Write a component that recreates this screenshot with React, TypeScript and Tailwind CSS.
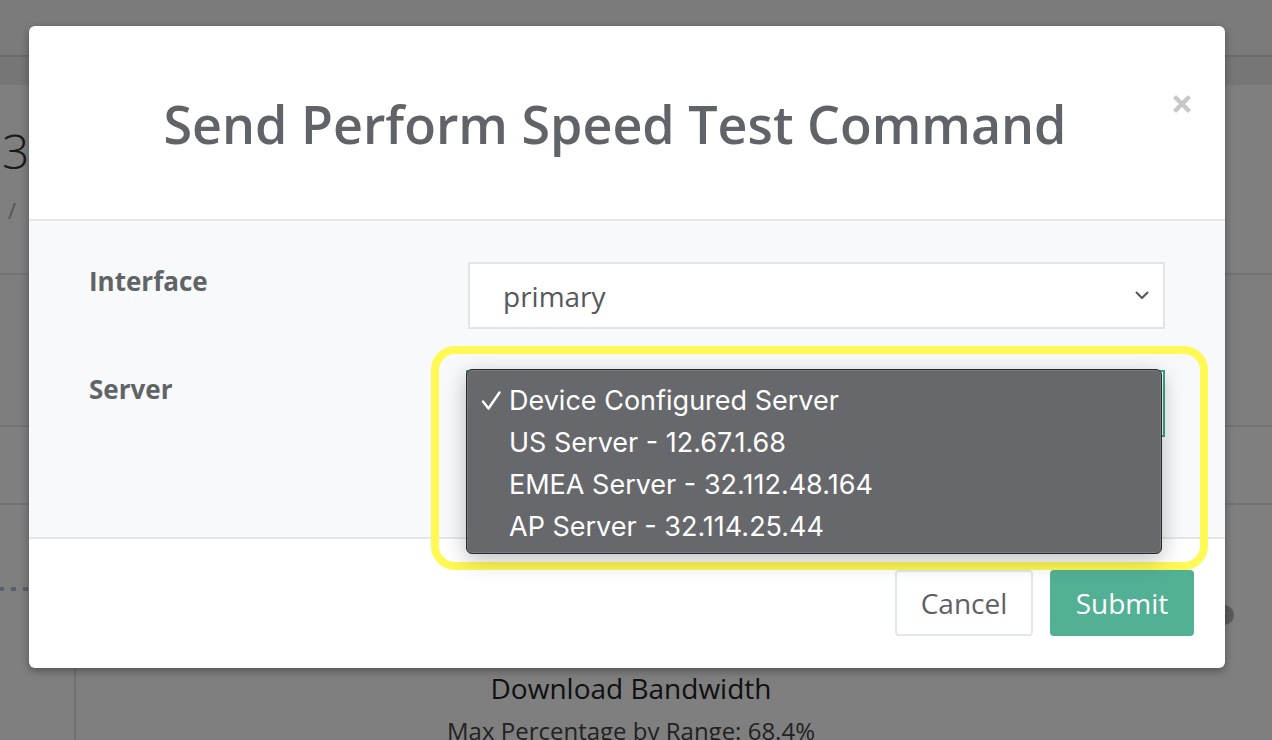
import React from 'react';

const servers = [
  'Device Configured Server',
  'US Server - 12.67.1.68',
  'EMEA Server - 32.112.48.164',
  'AP Server - 32.114.25.44',
];

// Page behind the dialog (dimmed by the backdrop)
const BackgroundPage = () => (
  <div className="w-[1272px] h-[740px] overflow-hidden bg-white text-[#333]" style={{ fontFamily: '"Open Sans", sans-serif' }}>
    <div className="h-[57px] bg-[#f6f6f6] border-b-2 border-[#d8d8d8]"></div>
    <div className="h-[28px] bg-[#ececec]"></div>
    <div className="h-[190px] border-b-2 border-[#e6e6e6] pl-[2px] pt-[42px]">
      <div className="text-[48px] leading-none font-light">3</div>
      <div className="text-[22px] text-[#aaa] mt-[24px] pl-[6px] leading-none">/</div>
    </div>
    <div className="h-[152px] bg-[#fbfbfb] border-b-2 border-[#e6e6e6]"></div>
    <div className="h-[78px] border-b-2 border-[#e6e6e6]"></div>
    <div className="flex">
      <div className="w-[76px] border-r-2 border-[#e2e2e2] h-[300px] pt-[82px]">
        <div className="flex gap-[7px]">
          <div className="w-[4px] h-[4px] bg-[#b4bed6]"></div>
          <div className="w-[5px] h-[4px] bg-[#b4bed6]"></div>
          <div className="w-[5px] h-[4px] bg-[#b4bed6]"></div>
        </div>
      </div>
      <div className="flex-1 flex flex-col pt-[100px]">
        <div className="flex justify-end pr-[38px]">
          <div className="w-[20px] h-[20px] rounded-full bg-[#b4b4b4]"></div>
        </div>
        <div className="flex flex-col items-center pr-[86px] mt-[44px]">
          <div className="text-[28px] leading-[38px] text-[#222]">Download Bandwidth</div>
          <div className="text-[24px] leading-[32px] text-[#444] mt-[8px]">Max Percentage by Range: 68.4%</div>
        </div>
      </div>
    </div>
  </div>
);

const Chevron = () => (
  <svg width="14" height="9" viewBox="0 0 14 9" fill="none">
    <path d="M1.5 1.5 L7 7 L12.5 1.5" stroke="#555" strokeWidth="2" strokeLinecap="round" strokeLinejoin="round" />
  </svg>
);

const CloseIcon = () => (
  <svg width="20" height="20" viewBox="0 0 20 20">
    <path d="M2.5 2.5 L17.5 17.5 M17.5 2.5 L2.5 17.5" stroke="#c9c9c9" strokeWidth="4.5" />
  </svg>
);

const CheckMark = () => (
  <svg width="22" height="22" viewBox="0 0 22 22" fill="none">
    <path d="M3 11.5 L8.5 18.5 L19.5 2.5" stroke="white" strokeWidth="2.4" strokeLinecap="round" strokeLinejoin="round" />
  </svg>
);

const App = () => {
  return (
    <div className="relative w-[1272px] h-[740px] overflow-hidden">
      <BackgroundPage />

      {/* Backdrop */}
      <div className="absolute inset-0 bg-black/50"></div>

      {/* Modal */}
      <div
        className="absolute left-[29px] top-[26px] w-[1196px] h-[642px] bg-white rounded-[6px] shadow-[0_3px_8px_rgba(0,0,0,0.35)] flex flex-col text-[#616467]"
        style={{ fontFamily: '"Open Sans", sans-serif' }}
      >
        <div className="relative h-[195px] border-b-2 border-[#e6e6e6] flex items-center justify-center pr-[24px]">
          <h1 className="text-[52px] font-semibold text-[#606367] mt-[2px]">Send Perform Speed Test Command</h1>
          <button className="absolute right-[33px] top-[68px]">
            <CloseIcon />
          </button>
        </div>

        <div className="h-[318px] bg-[#f8f9fa] border-b-2 border-[#e6e6e6] px-[60px] pt-[41px]">
          <div className="flex">
            <label className="w-[379px] text-[26px] font-bold pt-[3px] leading-[32px]">Interface</label>
            <div className="flex-1 h-[67px] bg-white border-2 border-[#e3e4e6] flex items-center justify-between pl-[33px] pr-[14px]">
              <span className="text-[28px] text-[#55585c]">primary</span>
              <Chevron />
            </div>
          </div>
          <div className="flex mt-[41px]">
            <label className="w-[377px] text-[26px] font-bold pt-[3px] leading-[32px]">Server</label>
            <div className="flex-1 h-[67px] bg-white border-2 border-[#3aa587]"></div>
          </div>
        </div>

        <div className="flex-1 flex justify-end items-start gap-[17px] pt-[31px] pr-[31px]">
          <button className="w-[138px] h-[66px] rounded-[4px] border-2 border-[#e4e7eb] text-[28px] text-[#5d6064] bg-white">Cancel</button>
          <button className="w-[144px] h-[66px] rounded-[4px] bg-[#52b095] text-[28px] text-white">Submit</button>
        </div>

        {/* Highlight ring */}
        <div className="absolute left-[402px] top-[320px] w-[777px] h-[224px] rounded-[24px] border-[8px] border-[#fef955]"></div>

        {/* Open native select menu */}
        <div
          className="absolute left-[437px] top-[343px] w-[696px] h-[185px] rounded-[6px] bg-[#67686b] border border-[#2a2a2c] shadow-[0_6px_22px_rgba(0,0,0,0.25),inset_0_0_0_1px_rgba(255,255,255,0.12)] pt-[10px]"
          style={{ fontFamily: 'Inter, "Open Sans", sans-serif' }}
        >
          {servers.map((s, i) => (
            <div key={s} className="h-[42px] flex items-center text-[27px] text-white">
              <span className="w-[42px] pl-[13px] flex items-center">{i === 0 ? <CheckMark /> : null}</span>
              <span>{s}</span>
            </div>
          ))}
        </div>
      </div>
    </div>
  );
};

export default App;
